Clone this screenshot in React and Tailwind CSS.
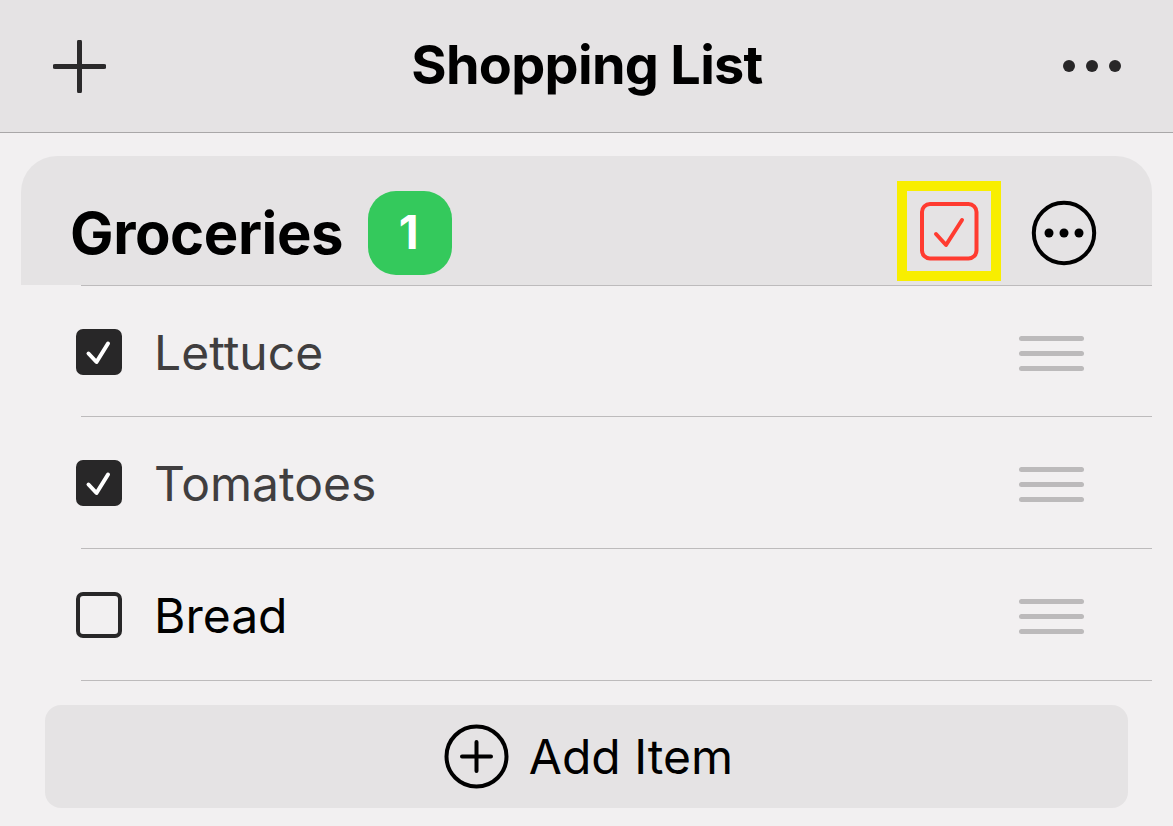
import React from "react";

const items = [
  { name: "Lettuce", done: true },
  { name: "Tomatoes", done: true },
  { name: "Bread", done: false },
];

function Check({ done }) {
  if (!done) {
    return <div className="w-[46px] h-[46px] rounded-[7px] border-[4px] border-[#282728] shrink-0" />;
  }
  return (
    <div className="w-[46px] h-[46px] rounded-[7px] bg-[#282728] flex items-center justify-center shrink-0">
      <svg width="46" height="46" viewBox="0 0 46 46" fill="none">
        <path d="M12.5 24.5 L20.5 33 L32 14.5" stroke="#fff" strokeWidth="4" strokeLinecap="round" strokeLinejoin="round" />
      </svg>
    </div>
  );
}

function Grip() {
  return (
    <div className="w-[65px] flex flex-col gap-[10px] shrink-0 mt-[2px]">
      <div className="h-[5px] rounded-full bg-[#bcbabb]" />
      <div className="h-[5px] rounded-full bg-[#bcbabb]" />
      <div className="h-[5px] rounded-full bg-[#bcbabb]" />
    </div>
  );
}

export default function App() {
  return (
    <div className="w-[1173px] h-[826px] overflow-hidden bg-[#f2f0f1] text-black font-['Inter',sans-serif]">
      {/* TOP BAR */}
      <div className="h-[133px] bg-[#e5e3e4] border-b border-[#a9a7a8] flex items-center justify-between pl-[53px] pr-[52px]">
        <svg width="53" height="53" viewBox="0 0 53 53" fill="none">
          <path d="M26.5 2 V51 M2 26.5 H51" stroke="#2b2a2b" strokeWidth="5" strokeLinecap="round" />
        </svg>
        <h1 className="text-[54px] leading-none font-bold tracking-[-0.7px] -mt-[3px] ml-[5px]">Shopping List</h1>
        <div className="flex gap-[11px]">
          <div className="w-[12px] h-[12px] rounded-full bg-[#282728]" />
          <div className="w-[12px] h-[12px] rounded-full bg-[#282728]" />
          <div className="w-[12px] h-[12px] rounded-full bg-[#282728]" />
        </div>
      </div>

      <div className="pt-[23px] pl-[21px] pr-[21px]">
        {/* SECTION HEADER */}
        <div className="h-[129px] bg-[#e5e3e4] rounded-t-[36px] flex items-center pl-[49px] pr-[55px] pt-[28px] pb-[4px]">
          <h2 className="text-[58px] leading-none font-bold tracking-[-0.4px]">Groceries</h2>
          <div className="ml-[25px] w-[84px] h-[84px] rounded-[28px] bg-[#34c95c] text-white flex items-center justify-center text-[46px] font-bold pr-[3px]">
            1
          </div>
          <div className="ml-auto -mt-[3px] w-[104px] h-[100px] border-[10px] border-[#f8ee00] flex items-center justify-center">
            <svg width="60" height="60" viewBox="0 0 60 60" fill="none">
              <rect x="3" y="3" width="54.5" height="54.5" rx="8" stroke="#ff3b30" strokeWidth="4" />
              <path d="M17 33 L27 44 L43 19" stroke="#ff3b30" strokeWidth="4" strokeLinecap="round" strokeLinejoin="round" />
            </svg>
          </div>
          <svg className="ml-[30px]" width="66" height="66" viewBox="0 0 66 66" fill="none">
            <circle cx="33" cy="33" r="30.2" stroke="#000" strokeWidth="4" />
            <circle cx="18" cy="33" r="4.5" fill="#000" />
            <circle cx="33" cy="33" r="4.5" fill="#000" />
            <circle cx="48" cy="33" r="4.5" fill="#000" />
          </svg>
        </div>

        {/* ROWS */}
        <div className="border-t border-[#bdbbbc] ml-[60px]" />
        {items.map((item, i) => (
          <div
            key={item.name}
            className={`ml-[60px] border-b border-[#bdbbbc] flex items-center pr-[68px] ${i === 0 ? "h-[131px] pt-[2px]" : "h-[132px] pt-[1px]"}`}
          >
            <div className="-ml-[5px] flex items-center gap-[32px] flex-1">
              <Check done={item.done} />
              <span className={`text-[48px] leading-none pt-[1px] ${item.done ? "text-[#403e3f]" : "text-black"}`}>
                {item.name}
              </span>
            </div>
            <Grip />
          </div>
        ))}

        {/* ADD ITEM */}
        <div className="mt-[24px] ml-[24px] mr-[24px] h-[103px] rounded-[16px] bg-[#e5e3e4] flex items-center justify-center gap-[20px] pl-[4px]">
          <svg width="65" height="65" viewBox="0 0 65 65" fill="none">
            <circle cx="32.5" cy="32.5" r="30" stroke="#000" strokeWidth="4" />
            <path d="M32.5 18 V47 M18 32.5 H47" stroke="#000" strokeWidth="4" strokeLinecap="round" />
          </svg>
          <span className="text-[48px] leading-none pt-[1px]">Add Item</span>
        </div>
      </div>
    </div>
  );
}
